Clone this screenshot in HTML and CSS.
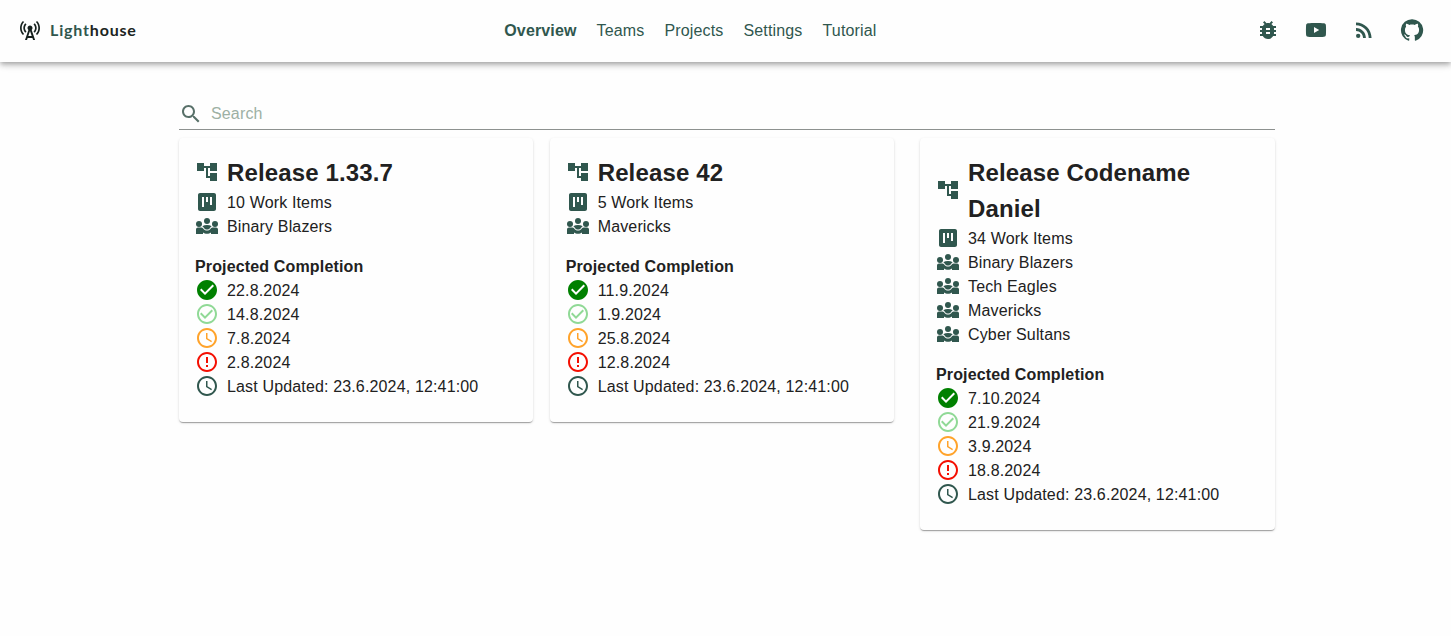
FILE: index.html
```html
<!DOCTYPE html>
<html lang="en">
<head>
<meta charset="utf-8">
<title>Lighthouse</title>
<link rel="stylesheet" href="styles.css">
</head>
<body>
<svg class="sprite" aria-hidden="true">
  <symbol id="tree" viewBox="0 0 24 24"><path d="M22 11V3h-7v3H9V3H2v8h7V8h2v10h4v3h7v-8h-7v3h-2V8h2v3z"/></symbol>
  <symbol id="kanban" viewBox="0 0 24 24"><path d="M19 3H5c-1.1 0-2 .9-2 2v14c0 1.1.9 2 2 2h14c1.1 0 2-.9 2-2V5c0-1.1-.9-2-2-2zM9 17H7V7h2v10zm4-5h-2V7h2v5zm4 3h-2V7h2v8z"/></symbol>
  <symbol id="groups" viewBox="0 0 24 24"><circle cx="12" cy="7" r="3"/><circle cx="4" cy="10" r="3"/><circle cx="20" cy="10" r="3"/><path d="M1 20v-4.500c0-1.200.9-2.100 2-2.100h3.300c.7 0 1.300.3 1.700.9 1 1.500 2.400 2.300 4 2.300s3-.8 4-2.300c.4-.6 1-.9 1.700-.9H21c1.100 0 2 .9 2 2.100V20h-7v-1.600c-1.100.9-2.500 1.400-4 1.400s-2.900-.5-4-1.400V20zM7.300 12.200c1.300-.7 2.900-1.100 4.700-1.100s3.400.4 4.700 1.100c-.8.400-1.200 1-1.700 1.700-.7.900-1.800 1.600-3 1.600s-2.300-.7-3-1.600c-.5-.7-.9-1.300-1.700-1.700z"/></symbol>
  <symbol id="check-fill" viewBox="0 0 24 24"><path d="M12 2C6.480 2 2 6.480 2 12s4.480 10 10 10 10-4.480 10-10S17.520 2 12 2zm-2 15l-5-5 1.410-1.410L10 14.170l7.590-7.590L19 8l-9 9z"/></symbol>
  <symbol id="check" viewBox="0 0 24 24"><path d="M16.590 7.580L10 14.170l-3.590-3.580L5 12l5 5 8-8zM12 2C6.480 2 2 6.480 2 12s4.480 10 10 10 10-4.480 10-10S17.520 2 12 2zm0 18c-4.420 0-8-3.580-8-8s3.580-8 8-8 8 3.580 8 8-3.580 8-8 8z"/></symbol>
  <symbol id="clock" viewBox="0 0 24 24"><path d="M11.990 2C6.470 2 2 6.480 2 12s4.470 10 9.990 10C17.520 22 22 17.520 22 12S17.520 2 11.990 2zM12 20c-4.420 0-8-3.580-8-8s3.580-8 8-8 8 3.580 8 8-3.580 8-8 8zm.5-13H11v6l5.250 3.150.75-1.230-4.500-2.670z"/></symbol>
  <symbol id="alert" viewBox="0 0 24 24"><path d="M11 15h2v2h-2zm0-8h2v6h-2zm.990-5C6.470 2 2 6.480 2 12s4.470 10 9.990 10C17.520 22 22 17.520 22 12S17.520 2 11.990 2zM12 20c-4.420 0-8-3.580-8-8s3.580-8 8-8 8 3.580 8 8-3.580 8-8 8z"/></symbol>
  <symbol id="search" viewBox="0 0 24 24"><path d="M15.500 14h-.79l-.28-.27C15.410 12.590 16 11.110 16 9.500 16 5.910 13.090 3 9.500 3S3 5.910 3 9.500 5.910 16 9.500 16c1.610 0 3.090-.59 4.230-1.570l.27.28v.79l5 4.990L20.490 19l-4.990-5zm-6 0C7.010 14 5 11.990 5 9.500S7.010 5 9.500 5 14 7.010 14 9.500 11.990 14 9.500 14z"/></symbol>
  <symbol id="bug" viewBox="0 0 24 24"><path d="M20 8h-2.810c-.45-.78-1.070-1.450-1.820-1.960L17 4.410 15.590 3l-2.170 2.170C12.960 5.060 12.490 5 12 5s-.96.060-1.410.17L8.410 3 7 4.410l1.620 1.630C7.880 6.550 7.260 7.220 6.810 8H4v2h2.090c-.05.33-.09.66-.09 1v1H4v2h2v1c0 .34.040.67.090 1H4v2h2.810c1.040 1.790 2.970 3 5.190 3s4.150-1.210 5.190-3H20v-2h-2.090c.05-.33.090-.66.090-1v-1h2v-2h-2v-1c0-.34-.04-.67-.09-1H20V8zm-6 8h-4v-2h4v2zm0-4h-4v-2h4v2z"/></symbol>
  <symbol id="video" viewBox="0 0 24 24"><path fill-rule="evenodd" d="M12 5c3 0 6 0 8 .3 1.300.2 1.800.8 1.900 2 .2 2.800.2 6.600 0 9.400-.1 1.200-.6 1.800-1.900 2-2 .3-5 .3-8 .3s-6 0-8-.3c-1.300-.2-1.800-.8-1.900-2-.2-2.800-.2-6.600 0-9.400.1-1.200.6-1.800 1.900-2 2-.3 5-.3 8-.3zM10 9v6l5.200-3z"/></symbol>
  <symbol id="rss" viewBox="0 0 24 24"><circle cx="6.180" cy="17.820" r="2.180"/><path d="M4 4.440v2.830c7.030 0 12.730 5.700 12.730 12.730h2.830c0-8.590-6.970-15.560-15.560-15.560zm0 5.660v2.830c3.900 0 7.070 3.170 7.070 7.070h2.830c0-5.470-4.430-9.900-9.900-9.900z"/></symbol>
  <symbol id="github" viewBox="0 0 24 24"><path d="M12 1.270a11 11 0 0 0-3.480 21.460c.55.090.73-.28.730-.55v-1.840c-3.030.64-3.670-1.460-3.670-1.460-.55-1.290-1.280-1.650-1.280-1.650-.92-.65.100-.65.100-.65 1.100 0 1.730 1.100 1.730 1.100.92 1.650 2.570 1.200 3.210.92a2 2 0 0 1 .64-1.470c-2.470-.27-5.040-1.190-5.040-5.500 0-1.100.46-2.100 1.200-2.840a3.760 3.760 0 0 1 0-2.930s.91-.28 3.110 1.100c1.800-.49 3.700-.49 5.500 0 2.100-1.380 3.020-1.100 3.020-1.100a3.760 3.760 0 0 1 .1 2.930c.83.740 1.200 1.740 1.200 2.940 0 4.210-2.570 5.130-5.040 5.400.45.370.82.920.82 2.020v3.030c0 .27.100.64.730.55A11 11 0 0 0 12 1.270"/></symbol>
  <symbol id="tower" viewBox="0 0 24 24"><path d="M7.300 14.700l1.200-1.200c-1-1-1.500-2.300-1.500-3.500s.5-2.600 1.500-3.500L7.300 5.300c-1.300 1.300-2 3-2 4.700s.7 3.400 2 4.700zM19.100 2.900l-1.200 1.200c1.600 1.600 2.400 3.800 2.400 5.900s-.8 4.300-2.400 5.900l1.200 1.200c2-2 2.900-4.500 2.900-7.100s-1-5.100-2.900-7.100z"/><path d="M6.100 4.100L4.900 2.900C3 4.900 2 7.400 2 10s1 5.100 2.900 7.100l1.200-1.200c-1.600-1.600-2.400-3.800-2.400-5.900s.8-4.300 2.400-5.900zm10.600 10.600c1.300-1.300 2-3 2-4.700s-.7-3.400-2-4.700l-1.200 1.200c1 1 1.500 2.300 1.500 3.500s-.5 2.600-1.500 3.500l1.200 1.200zM14.500 10c0-1.400-1.100-2.500-2.500-2.500S9.500 8.600 9.500 10c0 .8.300 1.500.9 1.900L7 22h2l.7-2h4.700l.7 2h2l-3.400-10.100c.500-.4.800-1.100.8-1.900zm-4.200 8l1.700-5 1.700 5h-3.400z"/></symbol>
</svg>

<header class="appbar">
  <div class="brand"><svg class="icon brand-icon"><use href="#tower"/></svg><span class="brand-name"><span class="brand-light">Light</span>house</span></div>
  <nav class="nav"><a class="active">Overview</a><a>Teams</a><a>Projects</a><a>Settings</a><a>Tutorial</a></nav>
  <div class="links">
    <svg class="icon"><use href="#bug"/></svg>
    <svg class="icon"><use href="#video"/></svg>
    <svg class="icon"><use href="#rss"/></svg>
    <svg class="icon"><use href="#github"/></svg>
  </div>
</header>

<main class="content">
  <label class="search"><svg class="icon search-icon"><use href="#search"/></svg><input class="search-input" placeholder="Search"></label>
  <div class="cards">
    <section class="card">
      <div class="row"><svg class="icon"><use href="#tree"/></svg><h2>Release 1.33.7</h2></div>
      <div class="row"><svg class="icon"><use href="#kanban"/></svg>10 Work Items</div>
      <div class="row"><svg class="icon"><use href="#groups"/></svg>Binary Blazers</div>
      <h3>Projected Completion</h3>
      <div class="row"><svg class="icon certain"><use href="#check-fill"/></svg>22.8.2024</div>
      <div class="row"><svg class="icon likely"><use href="#check"/></svg>14.8.2024</div>
      <div class="row"><svg class="icon realistic"><use href="#clock"/></svg>7.8.2024</div>
      <div class="row"><svg class="icon risky"><use href="#alert"/></svg>2.8.2024</div>
      <div class="row"><svg class="icon"><use href="#clock"/></svg>Last Updated: 23.6.2024, 12:41:00</div>
    </section>
    <section class="card narrow">
      <div class="row"><svg class="icon"><use href="#tree"/></svg><h2>Release 42</h2></div>
      <div class="row"><svg class="icon"><use href="#kanban"/></svg>5 Work Items</div>
      <div class="row"><svg class="icon"><use href="#groups"/></svg>Mavericks</div>
      <h3>Projected Completion</h3>
      <div class="row"><svg class="icon certain"><use href="#check-fill"/></svg>11.9.2024</div>
      <div class="row"><svg class="icon likely"><use href="#check"/></svg>1.9.2024</div>
      <div class="row"><svg class="icon realistic"><use href="#clock"/></svg>25.8.2024</div>
      <div class="row"><svg class="icon risky"><use href="#alert"/></svg>12.8.2024</div>
      <div class="row"><svg class="icon"><use href="#clock"/></svg>Last Updated: 23.6.2024, 12:41:00</div>
    </section>
    <section class="card wide">
      <div class="row"><svg class="icon"><use href="#tree"/></svg><h2>Release Codename Daniel</h2></div>
      <div class="row"><svg class="icon"><use href="#kanban"/></svg>34 Work Items</div>
      <div class="row"><svg class="icon"><use href="#groups"/></svg>Binary Blazers</div>
      <div class="row"><svg class="icon"><use href="#groups"/></svg>Tech Eagles</div>
      <div class="row"><svg class="icon"><use href="#groups"/></svg>Mavericks</div>
      <div class="row"><svg class="icon"><use href="#groups"/></svg>Cyber Sultans</div>
      <h3>Projected Completion</h3>
      <div class="row"><svg class="icon certain"><use href="#check-fill"/></svg>7.10.2024</div>
      <div class="row"><svg class="icon likely"><use href="#check"/></svg>21.9.2024</div>
      <div class="row"><svg class="icon realistic"><use href="#clock"/></svg>3.9.2024</div>
      <div class="row"><svg class="icon risky"><use href="#alert"/></svg>18.8.2024</div>
      <div class="row"><svg class="icon"><use href="#clock"/></svg>Last Updated: 23.6.2024, 12:41:00</div>
    </section>
  </div>
</main>
</body>
</html>
```
FILE: styles.css
```css
* { box-sizing: border-box; }
body {
  margin: 0;
  min-height: 100vh;
  background: #fefefe;
  color: #212121;
  font: 16px/24px "Liberation Sans", Arial, sans-serif;
}
.sprite { display: none; }
.icon { width: 24px; height: 24px; flex: none; fill: #30574e; }

.appbar {
  display: flex;
  justify-content: space-between;
  align-items: center;
  height: 62px;
  padding: 0 27px 2px 18px;
  background: #fefefe;
  box-shadow: 0 2px 4px -1px rgba(0,0,0,.2), 0 4px 5px rgba(0,0,0,.14), 0 1px 10px rgba(0,0,0,.12);
}
.brand { display: flex; align-items: center; gap: 8px; }
.brand-icon { fill: #16211e; }
.brand-name { font: 700 16px/24px Lato, sans-serif; letter-spacing: .82px; color: #1b2421; }
.brand-light { color: #30574e; }
.nav { display: flex; gap: 20px; margin-right: 12px; padding-top: 2px; color: #30574e; letter-spacing: .15px; }
.active { font-weight: 700; }
.links { display: flex; gap: 24px; }

.content { width: 1096px; margin: 36px 0 0 179px; }
.search {
  display: flex;
  align-items: center;
  gap: 8px;
  height: 32px;
  border-bottom: 1px solid #8d918f;
}
.search-icon { fill: #587069; }
.search-input {
  flex: 1;
  padding: 0;
  border: 0;
  background: none;
  font: inherit;
  letter-spacing: .15px;
}
.search-input::placeholder { color: #9db0a4; opacity: 1; }

.cards { display: flex; align-items: flex-start; margin-top: 8px; }
.card {
  width: 354px;
  padding: 17px 16px 23px;
  border-radius: 4px;
  background: #fefefe;
  box-shadow: 0 2px 1px -1px rgba(0,0,0,.2), 0 1px 1px rgba(0,0,0,.14), 0 1px 3px rgba(0,0,0,.12);
}
.narrow { width: 344px; margin: 0 26.33px 0 16.67px; }
.wide { width: 355px; }
.row { display: flex; align-items: center; gap: 8px; letter-spacing: .15px; }
.row .icon { margin: -1px 0 1px; }
h2, h3 { margin: 0; font-weight: 700; }
h2 { font-size: 24px; line-height: 36px; letter-spacing: .14px; }
h3 { margin-top: 16px; font-size: 16px; line-height: 24px; letter-spacing: .15px; }
.certain { fill: #008000; }
.likely { fill: #90d996; }
.realistic { fill: #ffa32b; }
.risky { fill: #f40f02; }
```
